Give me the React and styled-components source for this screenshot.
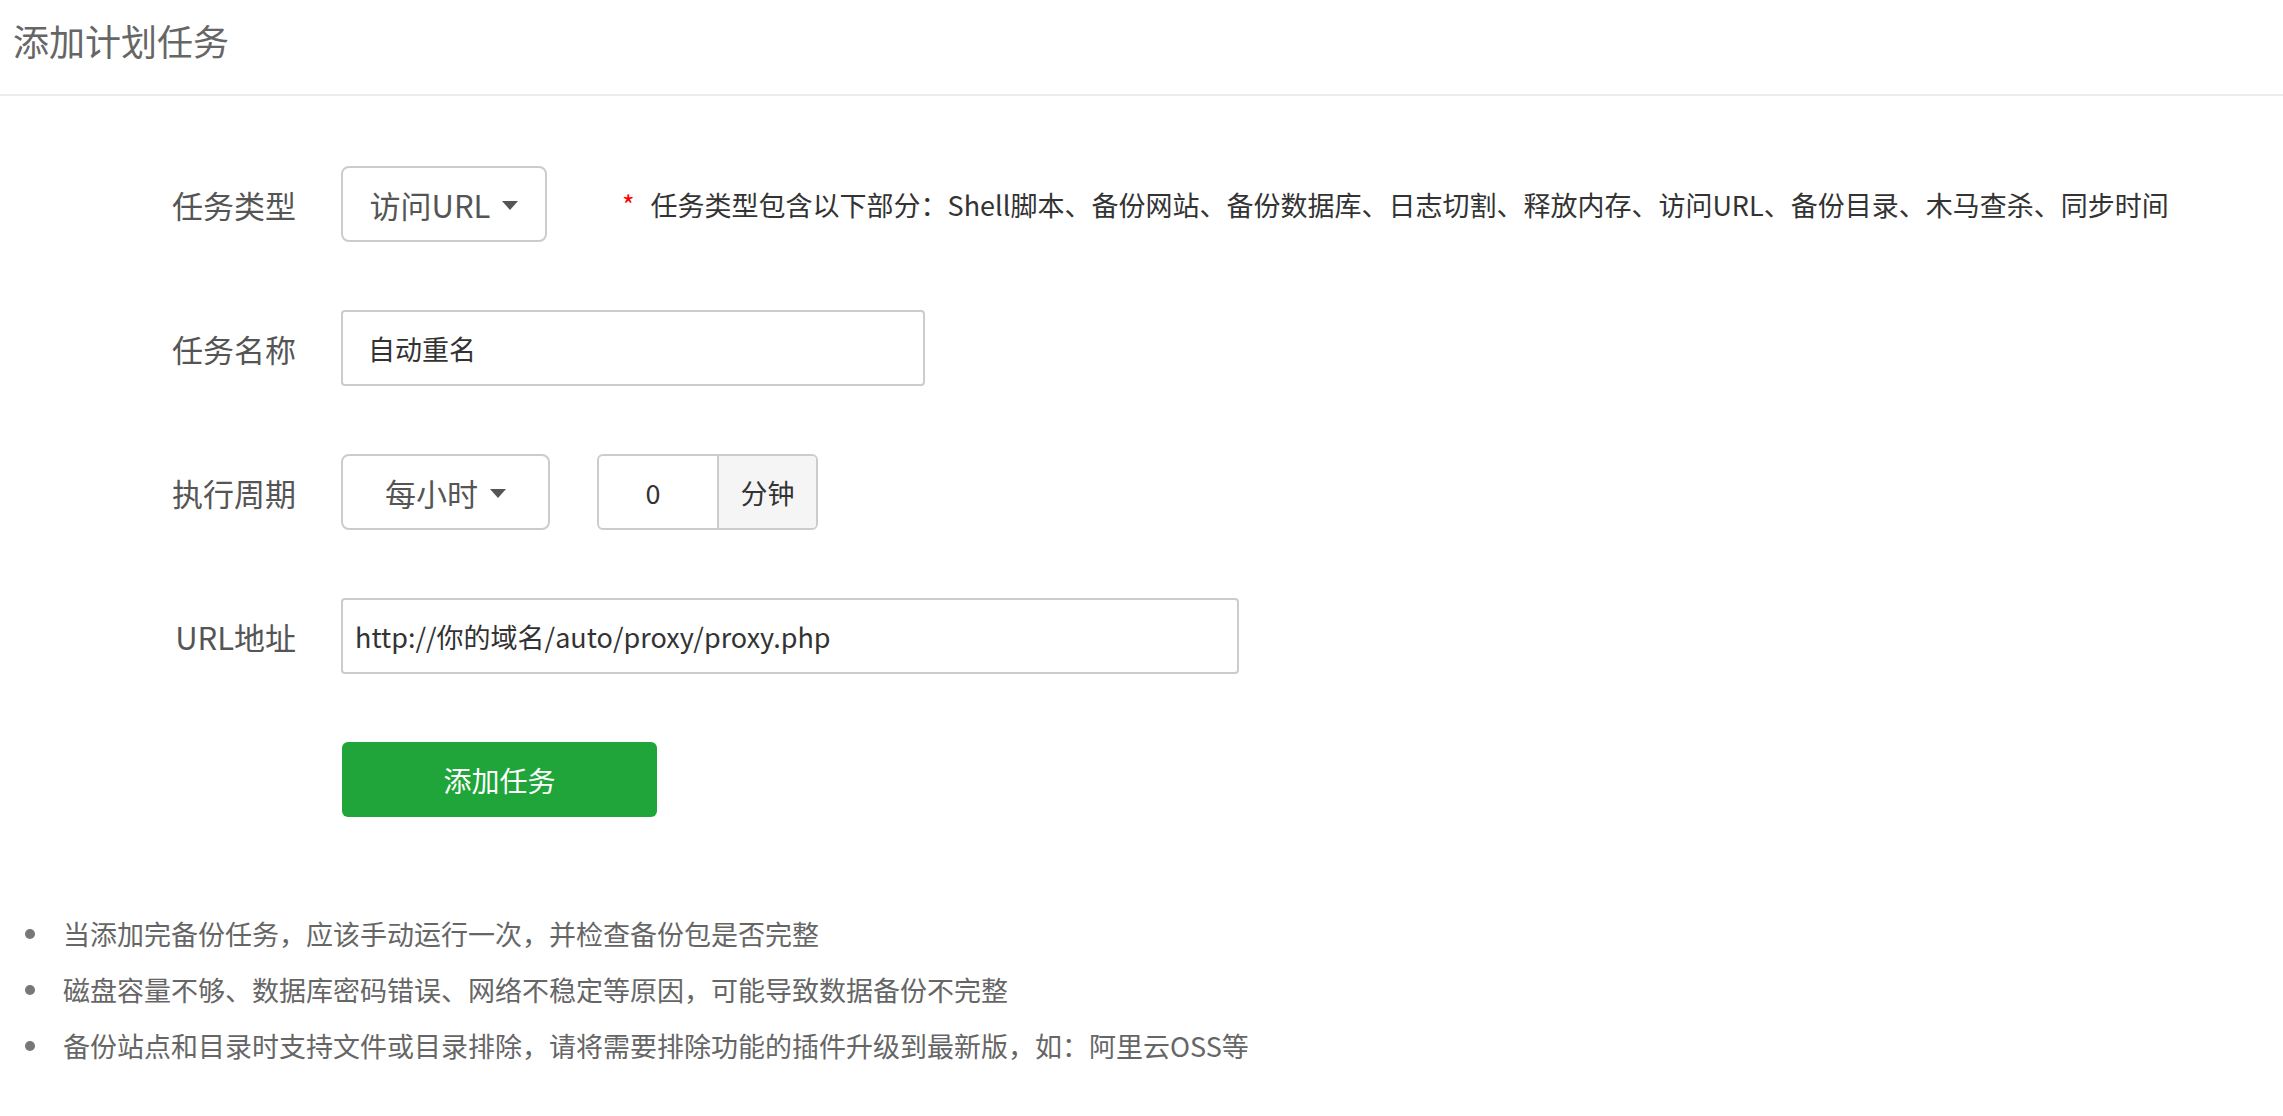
import styled, { createGlobalStyle } from "styled-components";

const GlobalStyle = createGlobalStyle`
  body {
    margin: 0;
    background: #fff;
    font-family: "Noto Sans CJK SC", "Noto Sans", sans-serif;
    color: #333;
  }
`;

const Page = styled.div`
  width: 2283px;
  min-height: 1116px;
`;

const Header = styled.div`
  height: 96px;
  display: flex;
  align-items: center;
  padding-left: 13px;
  padding-bottom: 14px;
  box-sizing: border-box;
  border-bottom: 2px solid #ececec;
  font-size: 36px;
  color: #666;
`;

const Form = styled.div`
  padding-top: 70px;
  display: flex;
  flex-direction: column;
  gap: 68px;
`;

const Row = styled.div`
  display: flex;
  align-items: center;
  height: 76px;
`;

const Label = styled.div`
  width: 200px;
  margin-left: 96px;
  margin-right: 45px;
  text-align: right;
  font-size: 31px;
  color: #555;
  white-space: nowrap;
`;

const Select = styled.div`
  width: ${(p) => p.$w}px;
  height: 76px;
  box-sizing: border-box;
  border: 2px solid #ccc;
  border-radius: 8px;
  display: flex;
  align-items: center;
  justify-content: center;
  gap: 12px;
  font-size: 31px;
  color: #555;
`;

const Caret = styled.span`
  width: 0;
  height: 0;
  border-left: 8px solid transparent;
  border-right: 8px solid transparent;
  border-top: 9px solid #555;
  margin-top: 3px;
`;

const Hint = styled.div`
  margin-left: 75px;
  font-size: 27px;
  color: #333;
  display: flex;
  align-items: center;
  white-space: nowrap;
`;

const Star = styled.span`
  color: #f00;
  margin-right: 16px;
`;

const TextInput = styled.div`
  width: ${(p) => p.$w}px;
  height: 76px;
  box-sizing: border-box;
  border: 2px solid #ccc;
  border-radius: 4px;
  display: flex;
  align-items: center;
  padding-left: ${(p) => p.$pad}px;
  font-size: 27px;
  color: #333;
  white-space: nowrap;
`;

const Group = styled.div`
  margin-left: 47px;
  display: flex;
  height: 76px;
  box-sizing: border-box;
  border: 2px solid #ccc;
  border-radius: 6px;
  overflow: hidden;
  font-size: 27px;
  color: #333;
`;

const GroupInput = styled.div`
  width: 120px;
  display: flex;
  align-items: center;
  justify-content: center;
  padding-right: 10px;
  box-sizing: border-box;
  border-right: 2px solid #ccc;
`;

const Addon = styled.div`
  width: 97px;
  display: flex;
  align-items: center;
  justify-content: center;
  background: #f5f5f5;
`;

const Submit = styled.button`
  margin-left: 342px;
  width: 315px;
  height: 75px;
  border: none;
  border-radius: 6px;
  background: #20a53a;
  color: #fff;
  font-family: inherit;
  font-size: 28px;
`;

const Notes = styled.ul`
  margin: 97px 0 0;
  padding: 0 0 0 63px;
  display: flex;
  flex-direction: column;
  gap: 17px;
`;

const Note = styled.li`
  list-style: none;
  position: relative;
  font-size: 27px;
  line-height: 39px;
  color: #666;

  &::before {
    content: "";
    position: absolute;
    left: -38px;
    top: 15px;
    width: 10px;
    height: 10px;
    border-radius: 50%;
    background: #777;
  }
`;

export default function App() {
  return (
    <Page>
      <GlobalStyle />
      <Header>添加计划任务</Header>
      <Form>
        <Row>
          <Label>任务类型</Label>
          <Select $w={206}>
            访问URL <Caret />
          </Select>
          <Hint>
            <Star>*</Star>
            任务类型包含以下部分：Shell脚本、备份网站、备份数据库、日志切割、释放内存、访问URL、备份目录、木马查杀、同步时间
          </Hint>
        </Row>
        <Row>
          <Label>任务名称</Label>
          <TextInput $w={584} $pad={25}>自动重名</TextInput>
        </Row>
        <Row>
          <Label>执行周期</Label>
          <Select $w={209}>
            每小时 <Caret />
          </Select>
          <Group>
            <GroupInput>0</GroupInput>
            <Addon>分钟</Addon>
          </Group>
        </Row>
        <Row>
          <Label>URL地址</Label>
          <TextInput $w={898} $pad={12}>http://你的域名/auto/proxy/proxy.php</TextInput>
        </Row>
        <div>
          <Submit>添加任务</Submit>
        </div>
      </Form>
      <Notes>
        <Note>当添加完备份任务，应该手动运行一次，并检查备份包是否完整</Note>
        <Note>磁盘容量不够、数据库密码错误、网络不稳定等原因，可能导致数据备份不完整</Note>
        <Note>备份站点和目录时支持文件或目录排除，请将需要排除功能的插件升级到最新版，如：阿里云OSS等</Note>
      </Notes>
    </Page>
  );
}
